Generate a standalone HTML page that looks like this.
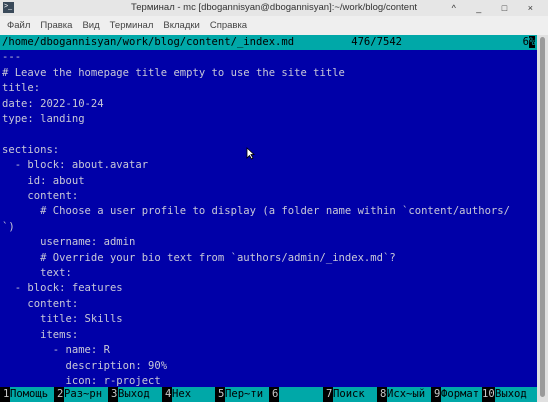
<!DOCTYPE html>
<html><head><meta charset="utf-8"><style>
*{margin:0;padding:0;box-sizing:border-box}
body{width:548px;height:402px;overflow:hidden;background:#ececec;font-family:"Liberation Sans","DejaVu Sans",sans-serif;position:relative}
.tb{position:absolute;left:0;top:0;width:548px;height:16px;background:#e6e6e6;font-size:9.5px;color:#333;text-align:center;line-height:16px}
.ic{position:absolute;left:3px;top:2px;width:11px;height:11px;background:#3a4a5a;color:#fff;font-size:7px;line-height:9px;text-align:left;padding-left:1px}
.ctl{position:absolute;right:6px;top:0;font-size:9px;letter-spacing:9px;color:#333}
.mb{position:absolute;left:0;top:16px;width:548px;height:19px;background:#efefef;font-size:9.5px;color:#444;line-height:19px}
.mb span{margin-left:7px;margin-right:3px}
.term{position:absolute;left:0;top:35px;width:537px;height:367px;background:#0000a8;overflow:hidden}
.sb{position:absolute;left:537px;top:35px;width:11px;height:367px;background:#e0e0e0}
.sb div{position:absolute;left:3px;top:2px;width:5px;height:360px;background:#9a9a9a;border-radius:3px}
pre{font-family:"DejaVu Sans Mono","Liberation Mono",monospace;font-size:10.55px;line-height:15.4px;color:#c8c8d8;white-space:pre;padding-left:2px}
.st{background:#00a8a8;color:#000;display:block;height:15.4px;margin-left:-2px;padding-left:2px}
.cur{background:#000;color:#00a8a8}
.fk{position:absolute;left:0;top:387px;width:537px;height:15px;background:#000;font-family:"DejaVu Sans Mono",monospace;font-size:10.55px;line-height:15px}
.fk span{position:absolute;top:0;height:15px}
.n{color:#c8c8c8}
.l{background:#00a8a8;color:#000}
</style></head><body>
<div class="tb"><div class="ic">&gt;_</div>Терминал - mc [dbogannisyan@dbogannisyan]:~/work/blog/content<div class="ctl">^ _ □ ×</div></div>
<div class="mb"><span>Файл</span><span>Правка</span><span>Вид</span><span>Терминал</span><span>Вкладки</span><span>Справка</span></div>
<div class="term"><pre><span class="st">/home/dbogannisyan/work/blog/content/_index.md         476/7542                   6<span class="cur">%</span></span>---
# Leave the homepage title empty to use the site title
title:
date: 2022-10-24
type: landing

sections:
  - block: about.avatar
    id: about
    content:
      # Choose a user profile to display (a folder name within `content/authors/
`)
      username: admin
      # Override your bio text from `authors/admin/_index.md`?
      text:
  - block: features
    content:
      title: Skills
      items:
        - name: R
          description: 90%
          icon: r-project</pre>
<svg style="position:absolute;left:246px;top:112px" width="9" height="13" viewBox="0 0 9 13"><path d="M1 1 L1 11 L3.5 8.5 L5.5 12 L7 11 L5 7.5 L8 7.5 Z" fill="#fff" stroke="#000" stroke-width="0.8"/></svg>
</div>
<div class="fk">
<span class="n" style="left:3px">1</span><span class="l" style="left:10px;width:44px">Помощь</span>
<span class="n" style="left:57px">2</span><span class="l" style="left:64px;width:44px">Раз~рн</span>
<span class="n" style="left:111px">3</span><span class="l" style="left:118px;width:44px">Выход</span>
<span class="n" style="left:165px">4</span><span class="l" style="left:172px;width:43px">Hex</span>
<span class="n" style="left:218px">5</span><span class="l" style="left:225px;width:44px">Пер~ти</span>
<span class="n" style="left:272px">6</span><span class="l" style="left:279px;width:44px"></span>
<span class="n" style="left:326px">7</span><span class="l" style="left:333px;width:44px">Поиск</span>
<span class="n" style="left:380px">8</span><span class="l" style="left:387px;width:44px">Исх~ый</span>
<span class="n" style="left:434px">9</span><span class="l" style="left:441px;width:41px">Формат</span>
<span class="n" style="left:482px">10</span><span class="l" style="left:495px;width:42px">Выход</span>
</div>
<div class="sb"><div></div></div>
</body></html>
